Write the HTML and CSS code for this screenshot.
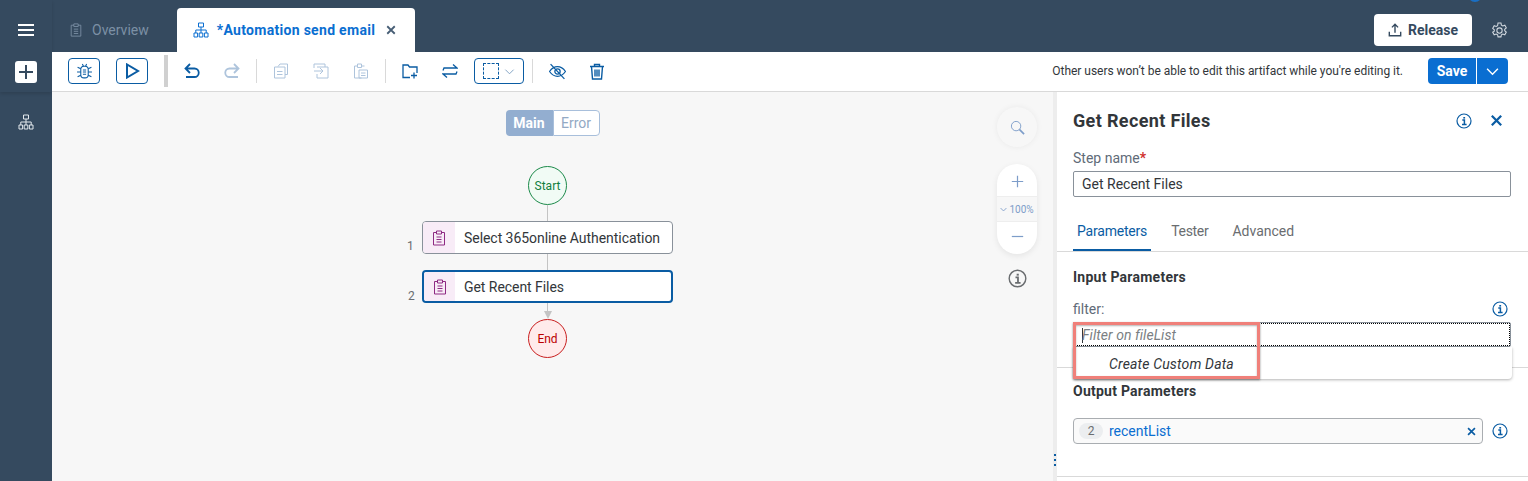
FILE: index.html
```html
<!DOCTYPE html>
<html lang="en">
<head>
  <meta charset="UTF-8">
  <title>Automation send email</title>
  <link rel="stylesheet" href="styles.css">
</head>
<body>
  <svg class="defs" width="0" height="0">
    <symbol id="i-tree" viewBox="0 0 16 16"><path d="M5.500 1h5v4h-5zM8 5v3M2.800 11V8h10.400v3M8 8v3M1 11h3.600v4H1zM6.200 11h3.600v4H6.200zM11.400 11H15v4h-3.600z"/></symbol>
    <symbol id="i-clip" viewBox="0 0 16 16"><path d="M5.500 2.500H2.500v12.500h11V2.500h-3M5.500 1h5v3h-5zM5.500 7h5M5.500 9.500h5M5.500 12h5"/></symbol>
    <symbol id="i-info" viewBox="0 0 16 16"><circle cx="8" cy="8" r="7" stroke-width="1.200"/><path d="M6.300 7h2.100v4.600M6 11.600h4.600" stroke-width="1.500"/><path d="M8.200 4v1.600" stroke-width="1.800"/></symbol>
    <symbol id="i-close" viewBox="0 0 16 16"><path d="M3 3l10 10M13 3L3 13"/></symbol>
  </svg>

  <div class="app">
    <!-- Left rail -->
    <div class="rail">
      <div class="rail-top">
        <div class="burger"><span></span><span></span><span></span></div>
        <div class="add-btn"><svg viewBox="0 0 16 16" width="16" height="16"><path d="M8 1v14M1 8h14"/></svg></div>
      </div>
      <svg class="icon rail-tree" width="16" height="16"><use href="#i-tree"/></svg>
    </div>

    <div class="main">
      <!-- Tabs -->
      <div class="topbar">
        <div class="tab">
          <svg class="icon" width="14" height="16"><use href="#i-clip"/></svg>
          <span>Overview</span>
        </div>
        <div class="tab active">
          <svg class="icon" width="16" height="16"><use href="#i-tree"/></svg>
          <span class="tab-name">*Automation send email</span>
          <svg class="icon tab-close" width="12" height="12"><use href="#i-close"/></svg>
        </div>
        <button class="release">
          <svg class="icon" viewBox="0 0 16 16" width="14" height="14"><path d="M8 11V2M4.500 5L8 1.500 11.500 5M1.500 10v4.500h13V10" stroke-width="1.600"/></svg>
          Release
        </button>
        <svg class="icon gear" viewBox="0 0 16 16" width="17" height="17"><circle cx="8" cy="8" r="2.500"/><path d="M6.600 1h2.800l.4 2 1.300.7 1.900-.7 1.400 2.500-1.500 1.300v1.400l1.500 1.300-1.400 2.500-1.900-.7-1.300.7-.4 2H6.600l-.4-2-1.300-.7-1.900.7-1.400-2.500L3.100 8.700V7.300L1.600 6 3 3.500l1.900.7 1.300-.7z"/></svg>
      </div>

      <!-- Toolbar -->
      <div class="toolbar">
        <button class="tool-btn">
          <svg class="icon" viewBox="0 0 16 16" width="17" height="17"><rect x="4.500" y="3" width="7" height="11" rx="3"/><path d="M6.500 6.500h3M6.500 8.500h3M6.500 10.500h3M6 1l1 2M10 1L9 3M4.500 5.500L1.500 4M4.500 8.500H1M4.500 11.500l-3 1.500M11.500 5.500l3-1.500M11.500 8.500H15M11.500 11.500l3 1.500"/></svg>
        </button>
        <button class="tool-btn">
          <svg class="icon" viewBox="0 0 16 16" width="16" height="16"><path d="M3 1.500v13L14 8z" stroke-width="2"/></svg>
        </button>
        <span class="sep-thick"></span>
        <svg class="icon tool-icon undo" viewBox="0 0 16 16" width="16" height="16"><path d="M6 1L1.500 5.500 6 10M1.500 5.500h9a4 4 0 010 8.500H2" stroke-width="1.800"/></svg>
        <svg class="icon tool-icon redo faded" viewBox="0 0 16 16" width="16" height="16"><path d="M10 1l4.500 4.500L10 10M14.500 5.500h-9a4 4 0 000 8.500H14" stroke-width="1.800"/></svg>
        <span class="sep first"></span>
        <svg class="icon tool-icon faded copy" viewBox="0 0 16 16" width="16" height="16"><path d="M5 3.500L7 1h7.500v10.500H12M1.500 4H7l5 0v11H1.500zM4 8.500h5.500M4 11.500h5.500"/></svg>
        <svg class="icon tool-icon faded paste-to" viewBox="0 0 16 16" width="16" height="16"><path d="M1 5V1h11v3M4 4h11v11H4v-4M1 8h9M7 5l3 3-3 3"/></svg>
        <svg class="icon tool-icon faded paste" viewBox="0 0 16 16" width="16" height="16"><path d="M4.500 3H1.500v12h7M11.500 3h-3M4.500 1h4v3.500h-4zM6 7h8.500v8H6zM8 10h4.500M8 12.500h4.500"/></svg>
        <span class="sep"></span>
        <svg class="icon tool-icon folder" viewBox="0 0 16 16" width="16" height="16"><path d="M8 14.500H1V2h5l1.500 2h7.500v6M12 9.500v6M9 12.500h6" stroke-width="1.300"/></svg>
        <svg class="icon tool-icon swap" viewBox="0 0 16 16" width="16" height="16"><path d="M1 7.500l1-2.500h13L11 1.500M15 8.500L14 11H1l4 3.500" stroke-width="1.300"/></svg>
        <button class="select-btn">
          <span class="marquee"></span>
          <svg class="icon" viewBox="0 0 12 12" width="11" height="11"><path d="M1.500 4L6 8.500 10.500 4"/></svg>
        </button>
        <span class="sep last"></span>
        <svg class="icon tool-icon eye" viewBox="0 0 16 16" width="17" height="17"><path d="M.5 8C3 4.500 5.500 3.500 8 3.500S13 4.500 15.500 8C13 11.500 10.500 12.500 8 12.500S3 11.500.5 8z" stroke-width="1.200"/><circle cx="8" cy="8" r="2.500" stroke-width="1.200"/><path d="M1.500 1l13 14" stroke-width="1.200"/></svg>
        <svg class="icon tool-icon trash" viewBox="0 0 16 16" width="16" height="17"><path d="M1 3h14M5.500 3V1h5v2M2.500 3l1 12.500h9l1-12.500M6 6v7M8 6v7M10 6v7" stroke-width="1.400"/></svg>
        <span class="lock-msg">Other users won’t be able to edit this artifact while you're editing it.</span>
        <div class="save-group">
          <button class="save">Save</button>
          <button class="save-more"><svg class="icon" viewBox="0 0 12 12" width="13" height="13"><path d="M1 3.500L6 8.500 11 3.500" stroke-width="1.300"/></svg></button>
        </div>
      </div>

      <div class="workspace">
        <!-- Flow canvas -->
        <div class="canvas">
          <div class="switch">
            <span class="switch-on">Main</span><span class="switch-off">Error</span>
          </div>

          <div class="flow-line line-a"></div>
          <div class="flow-line line-b"></div>
          <div class="flow-line line-c"></div>
          <div class="flow-arrow"></div>
          <div class="terminal start">Start</div>
          <div class="step step-1">
            <span class="step-num">1</span>
            <span class="step-icon"><svg class="icon" width="16" height="16"><use href="#i-clip"/></svg></span>
            <span>Select 365online Authentication</span>
          </div>
          <div class="step step-2 selected">
            <span class="step-num">2</span>
            <span class="step-icon"><svg class="icon" width="16" height="16"><use href="#i-clip"/></svg></span>
            <span>Get Recent Files</span>
          </div>
          <div class="terminal end">End</div>

          <div class="zoom-tools">
            <div class="zoom-search">
              <svg class="icon" viewBox="0 0 16 16" width="15" height="15"><circle cx="6.500" cy="6.500" r="5"/><path d="M10 10l5 5" stroke-width="1.800"/></svg>
            </div>
            <div class="zoom-pill">
              <div class="zoom-btn plus"><svg class="icon" viewBox="0 0 16 16" width="13" height="13"><path d="M8 1v14M1 8h14" stroke-width="1.500"/></svg></div>
              <div class="zoom-level"><svg class="icon" viewBox="0 0 12 12" width="7" height="7"><path d="M1 3.500L6 8.500 11 3.500" stroke-width="1.500"/></svg>100%</div>
              <div class="zoom-btn minus"><svg class="icon" viewBox="0 0 16 16" width="13" height="13"><path d="M1 8h14" stroke-width="1.500"/></svg></div>
            </div>
            <svg class="icon zoom-info" width="19" height="19"><use href="#i-info"/></svg>
          </div>
        </div>

        <div class="splitter"><span class="grip"></span></div>

        <!-- Properties panel -->
        <div class="panel">
          <div class="panel-head">
            <h2>Get Recent Files</h2>
            <svg class="icon info" width="16" height="16"><use href="#i-info"/></svg>
            <svg class="icon panel-close" width="15" height="15"><use href="#i-close"/></svg>
          </div>
          <div class="field">
            <div class="label">Step name<span class="req">*</span></div>
            <div class="input">Get Recent Files</div>
          </div>
          <div class="tabs">
            <span class="ptab current">Parameters</span>
            <span class="ptab tester">Tester</span>
            <span class="ptab advanced">Advanced</span>
          </div>
          <div class="section input-section">
            <h3>Input Parameters</h3>
            <div class="label-row">
              <span class="label">filter:</span>
              <svg class="icon info" width="16" height="16"><use href="#i-info"/></svg>
            </div>
            <div class="filter-wrap">
              <div class="input focused"><span class="caret"></span>Filter on fileList</div>
              <div class="popup">Create Custom Data</div>
              <div class="highlight"></div>
            </div>
          </div>
          <div class="section output-section">
            <h3>Output Parameters</h3>
            <div class="token-row">
              <div class="token-input">
                <span class="badge">2</span>
                <span class="token-name">recentList</span>
                <svg class="icon token-x" width="11" height="11"><use href="#i-close"/></svg>
              </div>
              <svg class="icon info" width="16" height="16"><use href="#i-info"/></svg>
            </div>
          </div>
        </div>
      </div>
    </div>
  </div>
  <div class="avatar"></div>
</body>
</html>
```

FILE: styles.css
```css
* {
  box-sizing: border-box;
}

body {
  margin: 0;
  height: 481px;
  overflow: hidden;
  background: #354a5f;
  font-family: Roboto, sans-serif;
  font-size: 14px;
  color: #32363a;
}

button {
  font-family: inherit;
  padding: 0;
}

.defs {
  position: absolute;
}

.icon {
  fill: none;
  stroke: currentColor;
  stroke-width: 1;
  flex: none;
}

.app {
  display: flex;
  height: 481px;
}

/* Left rail */
.rail {
  width: 52px;
  flex: none;
  display: flex;
  flex-direction: column;
  align-items: center;
  color: #fff;
}

.rail-top {
  width: 100%;
  height: 92px;
  padding-top: 24px;
  display: flex;
  flex-direction: column;
  align-items: center;
  box-shadow: 0 2px 3px rgba(0,0,0,0.12);
}

.burger {
  width: 16px;
  display: flex;
  flex-direction: column;
  gap: 3px;
}

.burger span {
  height: 2px;
  background: #fff;
}

.add-btn {
  width: 22px;
  height: 22px;
  margin-top: 25px;
  background: #fff;
  border-radius: 3px;
  display: flex;
  align-items: center;
  justify-content: center;
}

.add-btn svg {
  fill: none;
  stroke: #354a5f;
  stroke-width: 2;
}

.rail-tree {
  margin-top: 22px;
  color: #e3e8ed;
}

.main {
  flex: 1;
  display: flex;
  flex-direction: column;
  min-width: 0;
}

/* Tabs */
.topbar {
  height: 52px;
  flex: none;
  display: flex;
  align-items: flex-end;
  padding-left: 17px;
}

.tab {
  height: 44px;
  display: flex;
  align-items: center;
  gap: 9px;
  color: #7c90a5;
}

.tab.active {
  width: 238px;
  margin-left: 28px;
  padding-left: 16px;
  gap: 8px;
  background: #fff;
  border-radius: 4px 4px 0 0;
  color: #0a6ed1;
}

.tab-name {
  font-weight: 700;
  letter-spacing: 0.3px;
}

.tab-close {
  margin-left: 2px;
  color: #475e75;
  stroke-width: 2.400;
}

.release {
  width: 98px;
  height: 32px;
  margin-left: auto;
  margin-bottom: 6px;
  display: flex;
  align-items: center;
  justify-content: center;
  gap: 6px;
  background: #fff;
  border: none;
  border-radius: 4px;
  color: #354a5f;
  font-size: 14px;
  font-weight: 700;
}

.gear {
  margin: 0 20px 13px 19px;
  color: #d1d8df;
}

/* Toolbar */
.toolbar {
  height: 40px;
  flex: none;
  display: flex;
  align-items: center;
  padding: 0 20px 1px 16px;
  background: #fff;
  border-bottom: 1px solid #d9d9d9;
  color: #0a5ca3;
}

.tool-btn {
  width: 32px;
  height: 26px;
  margin-right: 16px;
  display: flex;
  align-items: center;
  justify-content: center;
  background: #fff;
  border: 1px solid #0a5ca3;
  border-radius: 4px;
  color: #0a5ca3;
}

.sep-thick {
  width: 4px;
  height: 32px;
  background: #d0d0d0;
}

.sep {
  width: 1px;
  height: 24px;
  margin: 0 16px;
  background: #d9d9d9;
}

.undo {
  margin-left: 16px;
}

.redo {
  margin-left: 24px;
}

.faded {
  color: #aec4dc;
}

.paste-to,
.paste {
  margin-left: 24px;
}

.swap {
  margin-left: 24px;
}

.select-btn {
  width: 50px;
  height: 26px;
  margin-left: 16px;
  display: flex;
  align-items: center;
  gap: 5px;
  padding-left: 8px;
  background: #fff;
  border: 1px solid #0a5ca3;
  border-radius: 4px;
  color: #7a9cc0;
}

.marquee {
  width: 16px;
  height: 16px;
  border: 1px dashed #0a5ca3;
}

.sep.last {
  margin: 0 16px 0 8px;
}

.trash {
  margin-left: 23px;
}

.lock-msg {
  margin-left: auto;
  font-size: 12px;
  letter-spacing: -0.03px;
  color: #32363a;
}

.save-group {
  display: flex;
  gap: 1px;
  margin-left: 25px;
}

.save,
.save-more {
  height: 26px;
  border: none;
  background: #0a6ed1;
  color: #fff;
  font-weight: 700;
  font-size: 14px;
}

.save {
  width: 48px;
  border-radius: 4px 0 0 4px;
}

.save-more {
  width: 31px;
  border-radius: 0 4px 4px 0;
  display: flex;
  align-items: center;
  justify-content: center;
}

/* Workspace */
.workspace {
  flex: 1;
  display: flex;
  min-height: 0;
}

.canvas {
  position: relative;
  width: 1001px;
  flex: none;
  background: #f7f7f7;
}

.switch {
  width: 94px;
  height: 26px;
  margin: 18px auto 0;
  display: flex;
  font-weight: 700;
  font-size: 14px;
}

.switch-on {
  width: 47px;
  background: #93aed0;
  color: #fff;
  border-radius: 4px 0 0 4px;
  text-align: center;
  line-height: 26px;
}

.switch-off {
  flex: 1;
  background: #fff;
  color: #93a9c4;
  border: 1px solid #a8bfdb;
  border-radius: 0 4px 4px 0;
  text-align: center;
  line-height: 24px;
  font-weight: 400;
}

/* Diagram nodes sit at their own place on the canvas */
.terminal {
  position: absolute;
  left: 476px;
  width: 39px;
  height: 39px;
  border-radius: 50%;
  display: flex;
  align-items: center;
  justify-content: center;
  font-size: 12px;
}

.start {
  top: 74px;
  background: #f1fbf5;
  border: 1px solid #1c8a4a;
  color: #107e3e;
}

.end {
  top: 227px;
  background: #ffebeb;
  border: 1px solid #c91f1f;
  color: #bb0000;
}

.step {
  position: absolute;
  left: 370px;
  width: 251px;
  height: 33px;
  display: flex;
  align-items: center;
  background: #fff;
  border: 1px solid #89919a;
  border-radius: 4px;
  font-size: 14px;
  letter-spacing: -0.05px;
}

.step-1 {
  top: 129px;
}

.step-2 {
  top: 178px;
}

.step.selected {
  border: 2px solid #0a5ca3;
}

.step-num {
  position: absolute;
  left: -16px;
  top: 17px;
  font-size: 12px;
  color: #6a6d70;
}

.step-icon {
  width: 32px;
  height: 100%;
  margin-right: 9px;
  display: flex;
  align-items: center;
  justify-content: center;
  background: #f8ecf7;
  border-radius: 3px 0 0 3px;
  color: #8e2a83;
}

.selected .step-icon {
  width: 31px;
}

.flow-line {
  position: absolute;
  left: 495px;
  width: 1px;
  background: #c4c4c4;
}

.line-a {
  top: 113px;
  height: 16px;
}

.line-b {
  top: 162px;
  height: 16px;
}

.line-c {
  top: 211px;
  height: 10px;
}

.flow-arrow {
  position: absolute;
  left: 492px;
  top: 219px;
  border: 4px solid transparent;
  border-top: 8px solid #c4c4c4;
  border-bottom: none;
}

.zoom-tools {
  position: absolute;
  left: 945px;
  top: 15px;
  width: 40px;
  display: flex;
  flex-direction: column;
  align-items: center;
  color: #7d9dc9;
}

.zoom-search {
  width: 40px;
  height: 40px;
  border-radius: 50%;
  display: flex;
  align-items: center;
  justify-content: center;
  background: #f7f7f7;
  box-shadow: 0 0 6px rgba(0,0,0,0.06);
}

.zoom-pill {
  width: 40px;
  height: 90px;
  margin-top: 17px;
  border-radius: 20px;
  background: #fff;
  box-shadow: 0 2px 6px rgba(0,0,0,0.08);
  display: flex;
  flex-direction: column;
}

.zoom-btn {
  height: 32px;
  flex: none;
  display: flex;
  align-items: center;
  justify-content: center;
}

.zoom-btn.plus {
  padding-top: 2px;
}

.zoom-btn.minus {
  padding-bottom: 4px;
}

.zoom-level {
  height: 26px;
  display: flex;
  align-items: center;
  justify-content: center;
  gap: 2px;
  font-size: 10px;
  background: #f7f7f7;
  border-top: 1px solid #eee;
  border-bottom: 1px solid #eee;
}

.zoom-info {
  margin-top: 15px;
  color: #6a6d70;
}

/* Splitter */
.splitter {
  position: relative;
  width: 4px;
  flex: none;
  background: #ededed;
}

.grip {
  position: absolute;
  left: 1px;
  top: 362px;
  width: 2px;
  height: 13px;
  background: repeating-linear-gradient(to bottom, #0a5ca3 0 2px, transparent 2px 5px);
}

/* Panel */
.panel {
  flex: 1;
  min-width: 0;
  background: #fff;
  position: relative;
}

.panel-head {
  height: 57px;
  padding: 0 24px 0 16px;
  display: flex;
  align-items: center;
  color: #0a5ca3;
}

.panel-head h2 {
  flex: 1;
  margin: 0;
  font-size: 18px;
  font-weight: 700;
  letter-spacing: 0.35px;
  color: #32363a;
}

.panel-close {
  margin-left: 17px;
  stroke-width: 2.400;
}

.field {
  padding: 0 17px 0 16px;
}

.label {
  color: #5f6b78;
  line-height: 18px;
}

.req {
  color: #d0302c;
  font-weight: 700;
}

.input {
  height: 26px;
  margin-top: 4px;
  padding-left: 8px;
  background: #fff;
  border: 1px solid #89919a;
  border-radius: 2px;
  line-height: 24px;
  color: #32363a;
}

.tabs {
  height: 55px;
  padding: 0 0 0 16px;
  display: flex;
  gap: 20px;
  align-items: stretch;
  border-bottom: 1px solid #d9d9d9;
}

.ptab {
  padding: 25px 4px 0;
  color: #6a6d70;
  line-height: 18px;
}

.ptab.tester {
  padding: 25px 0 0;
  letter-spacing: -0.3px;
}

.ptab.advanced {
  padding: 25px 0 0;
  margin-left: 4px;
}

.ptab.current {
  color: #0a5ca3;
  letter-spacing: -0.2px;
  border-bottom: 2px solid #0a5ca3;
}

.section {
  padding: 0 17px 0 16px;
}

.section h3 {
  margin: 0;
  font-size: 14px;
  font-weight: 700;
  line-height: 18px;
  letter-spacing: 0.25px;
  color: #32363a;
}

.input-section {
  height: 116px;
  padding-top: 16px;
  border-bottom: 1px solid #d9d9d9;
}

.label-row {
  margin-top: 14px;
  padding-right: 3px;
  display: flex;
  justify-content: space-between;
  align-items: center;
  color: #0a5ca3;
}

.filter-wrap {
  position: relative;
  margin-top: 4px;
}

.input.focused {
  margin-top: 0;
  height: 25px;
  border: 1px solid #89919a;
  outline: 1px dotted #000;
  outline-offset: -2px;
  font-style: italic;
  letter-spacing: 0.05px;
  color: #7b7f83;
}

.caret {
  display: inline-block;
  width: 1px;
  height: 15px;
  margin: 0 -1px -3px 0;
  background: #32363a;
}

/* Dropdown and the red marking lie over the panel */
.popup {
  position: absolute;
  left: 0;
  top: 25px;
  width: 439px;
  height: 32px;
  padding-left: 36px;
  background: #fff;
  border-radius: 0 0 4px 4px;
  box-shadow: 0 1px 3px rgba(0,0,0,0.3);
  font-style: italic;
  letter-spacing: 0.17px;
  line-height: 34px;
  color: #32363a;
  z-index: 2;
}

.highlight {
  position: absolute;
  left: 0;
  top: 0;
  width: 187px;
  height: 57px;
  border: 3px solid #f0807a;
  box-shadow: 0 1px 2px rgba(0,0,0,0.45), inset 0 1px 2px rgba(0,0,0,0.3);
  z-index: 3;
}

.output-section {
  height: 109px;
  padding-top: 14px;
  border-bottom: 1px solid #d9d9d9;
}

.token-row {
  margin-top: 18px;
  display: flex;
  align-items: center;
  gap: 9px;
  color: #0a5ca3;
}

.token-input {
  width: 410px;
  height: 26px;
  padding: 0 5px 0 5px;
  display: flex;
  align-items: center;
  background: #fafafa;
  border: 1px solid #a9adb1;
  border-radius: 4px;
}

.badge {
  width: 24px;
  height: 16px;
  margin-right: 6px;
  background: #eceef0;
  border-radius: 8px;
  font-size: 12px;
  line-height: 16px;
  text-align: center;
  color: #6a6d70;
}

.token-name {
  flex: 1;
  color: #0a6ed1;
}

.token-x {
  stroke-width: 2.400;
}

.avatar {
  position: absolute;
  left: 1468px;
  top: -12px;
  width: 14px;
  height: 14px;
  border-radius: 50%;
  background: #1a6fc4;
}
```
